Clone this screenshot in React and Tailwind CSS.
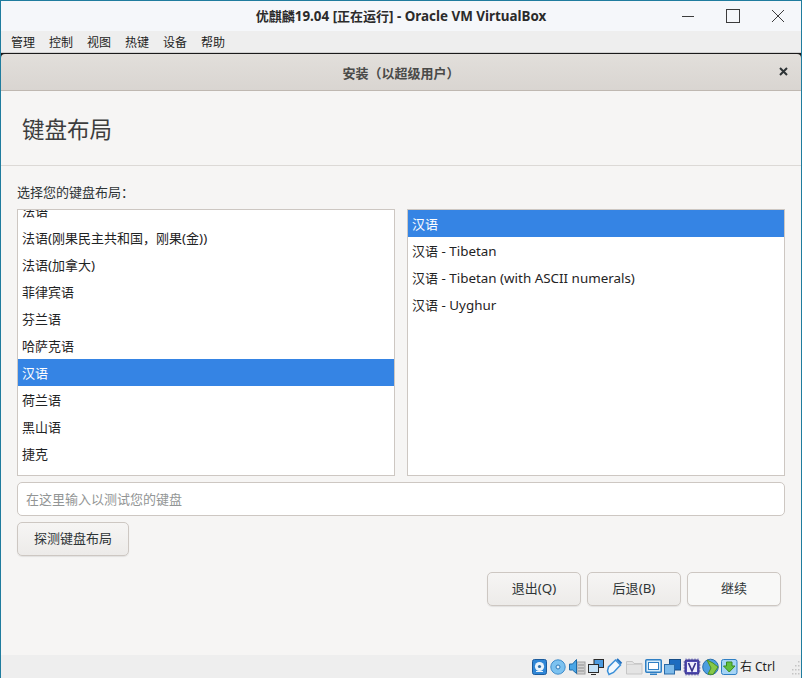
import React from "react";

const cjk = { fontFamily: '"Noto Sans", "Noto Sans CJK SC", sans-serif' };

const left = ["法语", "法语(刚果民主共和国，刚果(金))", "法语(加拿大)", "菲律宾语", "芬兰语", "哈萨克语", "汉语", "荷兰语", "黑山语", "捷克", "捷克语(带有字母数字)"];
const right = ["汉语", "汉语 - Tibetan", "汉语 - Tibetan (with ASCII numerals)", "汉语 - Uyghur"];

function T({ children }) {
  return children.split(/([\u3000-\u9fff\uff00-\uffef]+)/).map((part, i) =>
    i % 2 === 1 ? part : <span key={i} className="text-[13.4px]">{part}</span>
  );
}

function Row({ text, selected }) {
  return (
    <div className={`h-[27px] leading-[28px] pl-[4px] text-[13px] whitespace-nowrap ${selected ? "bg-[#3584e4] text-white" : "text-[#1f2324]"}`}>
      <T>{text}</T>
    </div>
  );
}

function Btn({ children, light, className = "" }) {
  return (
    <button className={`h-[34px] pb-px rounded-[5px] border border-[#cdc7c2] text-[13px] text-[#2e3436] shadow-[0_1px_1px_rgba(0,0,0,0.08)] ${light ? "bg-[#f8f8f7]" : "bg-gradient-to-b from-[#f6f5f4] to-[#edebe9]"} ${className}`}>
      <T>{children}</T>
    </button>
  );
}

function StatusIcons() {
  return (
    <svg width="206" height="18" viewBox="0 0 206 18" className="block">
      {/* hard disk */}
      <rect x="0.5" y="1.5" width="14" height="15" rx="2" fill="#2f86d6" stroke="#1c5b9c" />
      <circle cx="7.5" cy="8.5" r="4.6" fill="#eaf4fc" />
      <circle cx="7.5" cy="8.5" r="1.6" fill="#2b6ea8" />
      <path d="M4 13.5h7" stroke="#eaf4fc" />
      {/* optical disc */}
      <g transform="translate(18 0)">
        <circle cx="8" cy="9" r="7.2" fill="#7cc2f0" stroke="#3f8ccb" />
        <circle cx="8" cy="9" r="2" fill="#e4f3ff" stroke="#2f78b5" />
      </g>
      {/* audio */}
      <g transform="translate(37 0)">
        <rect x="8" y="4" width="8" height="12" fill="#d2d2d2" stroke="#a0a0a0" />
        <path d="M9 7h6M9 10h6M9 13h6" stroke="#8f8f8f" />
        <path d="M0.5 6h3l4-4.5v14l-4-3.500h-3z" fill="#4aa6e6" stroke="#1d6aa8" />
      </g>
      {/* network */}
      <g transform="translate(56 0)">
        <rect x="6" y="1.500" width="9.500" height="8" fill="#4c9be0" stroke="#2b2b2b" />
        <rect x="0.500" y="6.500" width="10" height="8" fill="#c4e1f7" stroke="#2b2b2b" />
        <path d="M3 16.500h5" stroke="#2b2b2b" />
      </g>
      {/* USB */}
      <g transform="translate(75 0)">
        <path d="M2 16.500l-1.500-3.500 1-4 7-7 5 5-7 7.500z" fill="#f0f8fe" stroke="#3a8fd8" strokeWidth="1.5" />
        <path d="M10 1l4.500 4.500" stroke="#1f6fc0" strokeWidth="2" />
      </g>
      {/* shared folder, disabled */}
      <g transform="translate(94 0)">
        <path d="M0.500 3.500h6l1.500 2h8v10.500h-15.500z" fill="#e4e4e4" stroke="#c6c6c6" />
        <path d="M1 6.500h15" stroke="#d0d0d0" />
      </g>
      {/* display */}
      <g transform="translate(113 0)">
        <rect x="0.750" y="1.750" width="15.500" height="12.500" rx="1" fill="#d5ecfb" stroke="#2f7fc4" strokeWidth="1.500" />
        <rect x="3.500" y="4.500" width="10" height="7" fill="#fff" stroke="#2f7fc4" />
        <path d="M5 16.250h7" stroke="#2f7fc4" strokeWidth="1.500" />
      </g>
      {/* capture */}
      <g transform="translate(132 0)">
        <rect x="5.500" y="1.500" width="11" height="10.500" fill="#1d6cc0" stroke="#154c86" />
        <rect x="0.500" y="6.500" width="10" height="9.500" fill="#7dbaea" stroke="#2a6aa8" />
      </g>
      {/* VT-x chip */}
      <g transform="translate(151 0)">
        <path d="M3 0.500v17M6 0.500v17M9 0.500v17M12 0.500v17M15 0.500v17M0.500 4h17M0.500 7h17M0.500 10h17M0.500 13h17" stroke="#6a66bd" />
        <rect x="2" y="2" width="14" height="14" rx="1.500" fill="#4f4ab0" stroke="#37338a" />
        <rect x="4" y="4" width="10" height="10" fill="#eeeefc" />
        <path d="M5.500 5l3.500 8 3.500-8" fill="none" stroke="#37338a" strokeWidth="1.700" />
      </g>
      {/* globe */}
      <g transform="translate(170 0)">
        <circle cx="8.500" cy="9" r="7.800" fill="#4c9fe0" stroke="#2a6fae" />
        <path d="M5 2l6 3 5 4-5 7.500-5-.5 3-6z" fill="#86c84a" stroke="#4a8f22" />
      </g>
      {/* additions */}
      <g transform="translate(189 0)">
        <rect x="0.500" y="1.500" width="15.500" height="15" rx="2" fill="#a5d4f5" stroke="#2f7fc4" />
        <path d="M5.500 4h5.500v4h3l-5.750 6-5.750-6h3z" fill="#62c03e" stroke="#3a8a1e" />
      </g>
    </svg>
  );
}

export default function App() {
  return (
    <div className="w-[802px] h-[678px] flex flex-col bg-[#f6f5f4] border-x border-t border-[#1f7c9e] overflow-hidden" style={cjk}>
      {/* OS title bar */}
      <div className="h-[30px] shrink-0 bg-[#f5f7fa] relative flex items-center justify-center">
        <span className="text-[13px] font-bold text-[#2b2b2b]"><T>优麒麟19.04 [正在运行] - Oracle VM VirtualBox</T></span>
        <div className="absolute right-0 top-0 h-[30px] flex items-center">
          <svg width="150" height="30" viewBox="0 0 150 30" fill="none" stroke="#3c3c3c">
            <path d="M31 15.500h12" />
            <rect x="75.500" y="8.500" width="13" height="13" />
            <path d="M121 9l12 12M133 9l-12 12" />
          </svg>
        </div>
      </div>
      {/* Menu bar */}
      <div className="h-[22px] shrink-0 bg-[#eeeeee] flex items-center pt-[3px] pl-[10px] gap-[14px] text-[12px] text-[#1e1e1e] border-b border-[#d0d0d0]">
        {["管理", "控制", "视图", "热键", "设备", "帮助"].map((m) => (
          <span key={m} className="w-[24px] whitespace-nowrap">{m}</span>
        ))}
      </div>
      {/* Dialog header */}
      <div className="h-[38px] shrink-0 bg-[#1a1a1a]">
        <div className="mt-px h-[37px] rounded-t-[4px] bg-gradient-to-b from-[#e2dfdb] to-[#d9d5d1] border-b border-[#bfb8b1] relative flex items-center justify-center pt-[3px]">
          <span className="text-[13px] font-bold text-[#4a4a48]">安装（以超级用户）</span>
          <span className="absolute right-[13px] top-[13px] text-[#2e3436]">
            <svg width="9" height="9" viewBox="0 0 9 9" stroke="currentColor" strokeWidth="2" className="block"><path d="M1 1l7 7M8 1l-7 7" /></svg>
          </span>
        </div>
      </div>
      {/* Page title */}
      <div className="h-[75px] shrink-0 bg-[#f6f5f4] border-b border-[#dcd9d6] flex items-center pl-[21px] pt-[4px] text-[22.5px] text-[#3d3d3d]">
        键盘布局
      </div>
      {/* Body */}
      <div className="flex-1 flex flex-col pl-[16px]">
        <div className="h-[43px] pt-[16px] text-[13px] leading-[20px] text-[#2e3436]">选择您的键盘布局：</div>
        <div className="flex gap-[12px] h-[267px]">
          <div className="w-[378px] bg-white border border-[#cdc7c2] overflow-hidden">
            <div className="-mt-[13px]">
              {left.map((t, i) => <Row key={i} text={t} selected={i === 6} />)}
            </div>
          </div>
          <div className="w-[378px] bg-white border border-[#cdc7c2] overflow-hidden">
            {right.map((t, i) => <Row key={i} text={t} selected={i === 0} />)}
          </div>
        </div>
        <div className="mt-[6px] h-[34px] w-[768px] bg-white border border-[#cdc7c2] rounded-[5px] flex items-center pl-[8px] pt-px text-[13px] text-[#929595]">
          在这里输入以测试您的键盘
        </div>
        <Btn className="mt-[6px] w-[112px]">探测键盘布局</Btn>
        <div className="mt-[16px] flex justify-end gap-[6px] w-[764px]">
          <Btn className="w-[94px]">退出(Q)</Btn>
          <Btn className="w-[94px]">后退(B)</Btn>
          <Btn light className="w-[94px]">继续</Btn>
        </div>
      </div>
      {/* Status bar */}
      <div className="h-[23px] shrink-0 bg-[#eeeeee] flex items-center justify-end pr-[1px] text-[12px] text-[#1e1e1e] relative">
        <StatusIcons />
        <span className="whitespace-nowrap ml-[2px] mr-[25px]">右 Ctrl</span>
        <svg width="8" height="15" viewBox="0 0 8 15" className="absolute right-[1px] bottom-[3px]" fill="#c4c4c4">
          <rect x="6" y="1" width="1.500" height="1.500" />
          <rect x="6" y="5" width="1.500" height="1.500" />
          <rect x="3" y="5" width="1.500" height="1.500" />
          <rect x="6" y="9" width="1.500" height="1.500" />
          <rect x="3" y="9" width="1.500" height="1.500" />
          <rect x="0" y="9" width="1.500" height="1.500" />
          <rect x="6" y="13" width="1.500" height="1.500" />
          <rect x="3" y="13" width="1.500" height="1.500" />
          <rect x="0" y="13" width="1.500" height="1.500" />
        </svg>
      </div>
    </div>
  );
}
